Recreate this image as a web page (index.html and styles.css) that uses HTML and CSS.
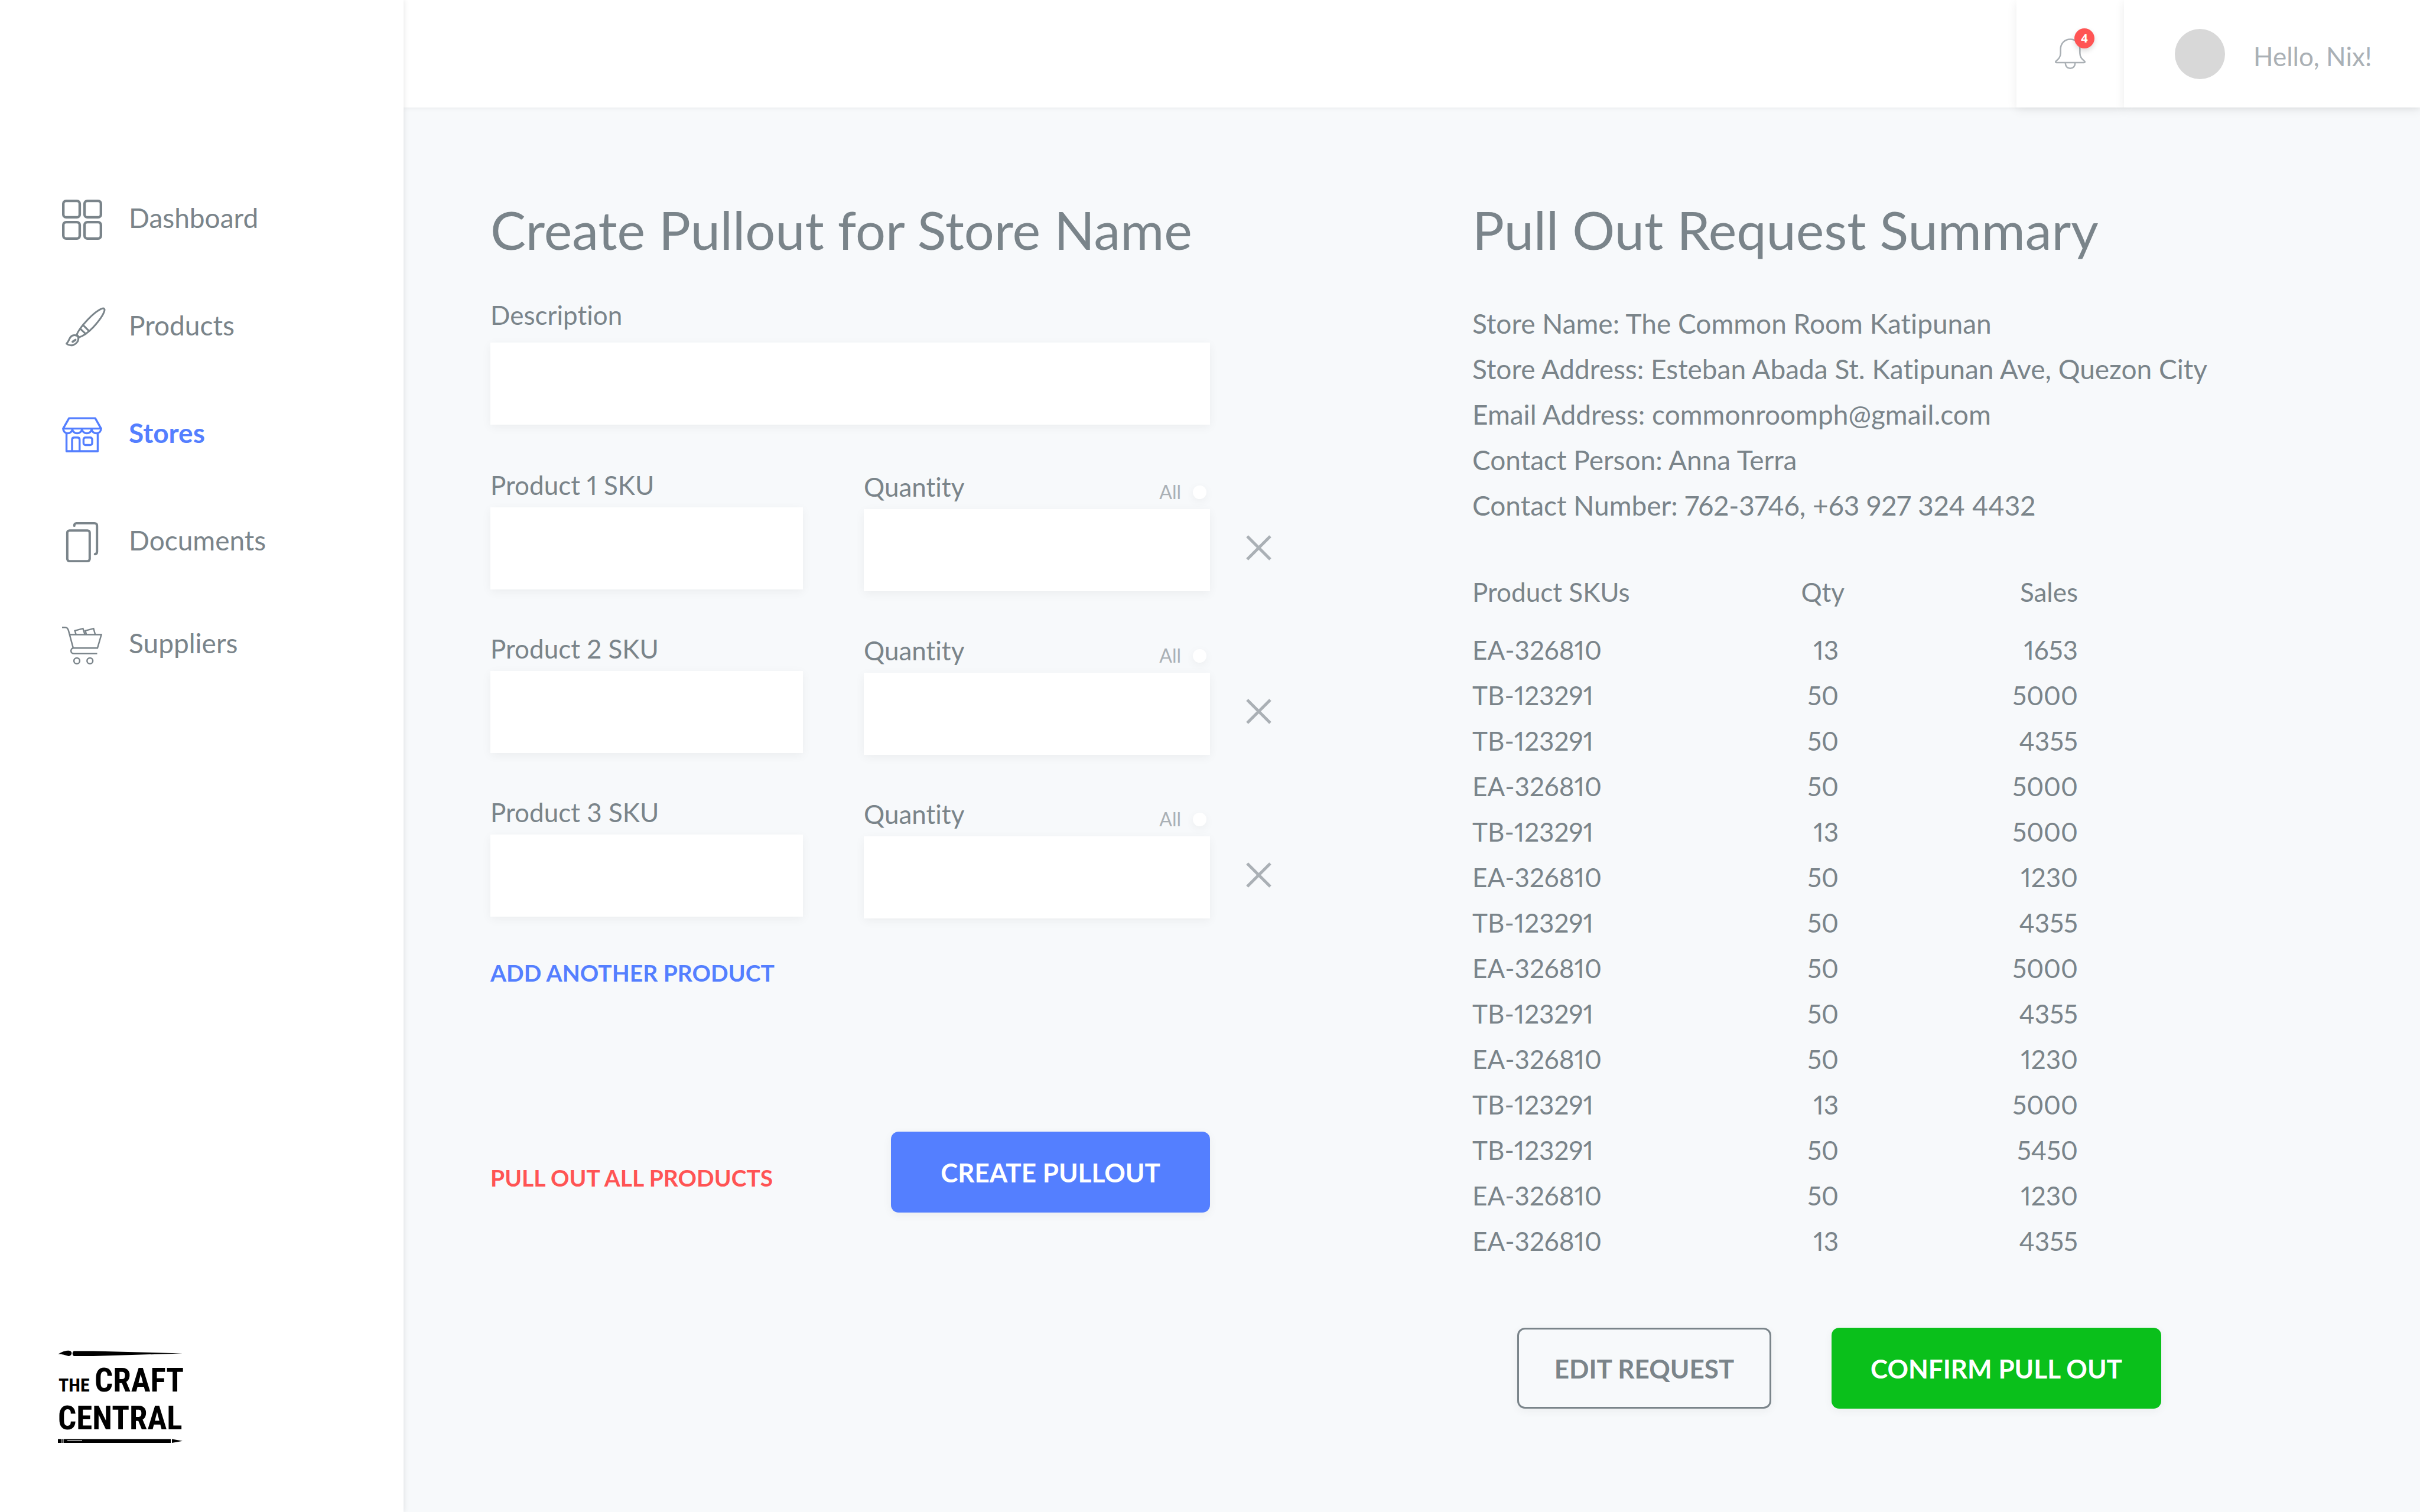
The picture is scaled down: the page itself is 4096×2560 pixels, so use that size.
FILE: index.html
```html
<!DOCTYPE html>
<html lang="en">
<head>
<meta charset="utf-8">
<title>Create Pullout</title>
<link rel="stylesheet" href="styles.css">
</head>
<body>
<div class="app">
  <aside class="sidebar">
    <nav class="nav" aria-label="Main">
      <a class="nav-item" href="#dashboard">
        <svg class="nav-icon" viewBox="0 0 72 72" fill="none" stroke="currentColor" stroke-width="4.6">
          <rect x="2.3" y="2.3" width="29.4" height="29.4" rx="5"/><rect x="40.3" y="2.3" width="29.4" height="29.4" rx="5"/>
          <rect x="2.3" y="40.3" width="29.4" height="29.4" rx="5"/><rect x="40.3" y="40.3" width="29.4" height="29.4" rx="5"/>
        </svg>
        <span>Dashboard</span>
      </a>
      <a class="nav-item" href="#products">
        <svg class="nav-icon" viewBox="0 0 72 72" fill="none" stroke="currentColor" stroke-width="3.2" stroke-linecap="round" stroke-linejoin="round">
          <path d="M26 50C29 42 36 33 45 23.500C55 13 66 4.500 72 2.500C75 1.500 77 3.500 76 6.500C74 14 66 25 56 36C47 45.500 38 52 29.500 54.500"/>
          <path d="M33 39L42.500 48M38.500 33L47.500 42M27 50L30.500 54"/>
          <path d="M8 65.500C12 62 12 58 15 54C19 48.500 27 49.500 29 54C30.500 60 26 66 20 68C15.500 69.300 11 68 8 65.500Z"/>
          <path d="M19 62L24 58.800" stroke-width="4"/>
        </svg>
        <span>Products</span>
      </a>
      <a class="nav-item nav-item-active" href="#stores" aria-current="page">
        <svg class="nav-icon" viewBox="0 0 72 72" fill="none" stroke="currentColor" stroke-width="3.600" stroke-linejoin="round">
          <path d="M12.500 6.500H59.500L70 25H2Z"/>
          <path d="M2 25C2 30 5.500 33.500 10 33.500C14.500 33.500 18.500 30 18.500 26C18.500 30 22.500 33.500 27 33.500C31.500 33.500 35.700 30 35.700 26C35.700 30 40 33.500 44.500 33.500C49 33.500 53 30 53 26C53 30 57 33.500 61.500 33.500C66.500 33.500 70 30 70 25"/>
          <path d="M8 33V65.700H64V33"/>
          <path d="M18 65V45C18 42.500 19.500 41 22 41H27.500C30 41 31.500 42.500 31.500 45V65"/>
          <rect x="38.500" y="41" width="15.500" height="13.500" rx="3.500"/>
        </svg>
        <span>Stores</span>
      </a>
      <a class="nav-item" href="#documents">
        <svg class="nav-icon" viewBox="0 0 72 72" fill="none" stroke="currentColor" stroke-width="4.200" stroke-linecap="round">
          <rect x="9.400" y="15" width="40.200" height="55" rx="4"/>
          <path d="M22 6.500C22 3.500 23.500 2 26 2H58C61 2 62.700 3.500 62.700 6.500V53C62.700 56 61 57.300 59 57.500"/>
        </svg>
        <span>Documents</span>
      </a>
      <a class="nav-item nav-item-last" href="#suppliers">
        <svg class="nav-icon" viewBox="0 0 72 72" fill="none" stroke="currentColor" stroke-width="2.600">
          <path d="M0 4.500H5.500C9 4.500 10.500 6.500 11.500 10L20 41.500H63.500L70.500 17.500H13.500"/>
          <path d="M20 41.500C14.500 42.500 14.500 51.500 21.500 51.500H63"/>
          <path d="M25 17L23 10.500L37.500 6.500L41 17.500M43.500 17L41.800 10.500L56.500 6.500L59.500 17.500"/>
          <circle cx="26.500" cy="64.500" r="5.200"/><circle cx="50" cy="64.500" r="5.200"/>
        </svg>
        <span>Suppliers</span>
      </a>
    </nav>
    <svg class="logo" viewBox="0 0 211 157" role="img" aria-label="The Craft Central">
      <path d="M0 7C8 2 14 0 20 1C26 3 23 10 18 10C12 9 8 6 0 7Z"/>
      <path d="M27 1.500H60L211 5.500L60 10H27C24 8 24 3.500 27 1.500Z"/>
      <text class="logo-small" x="1" y="70">THE</text>
      <text class="logo-large" x="62" y="70">CRAFT</text>
      <text class="logo-large" x="0" y="134">CENTRAL</text>
      <path fill-rule="evenodd" d="M0 150.500H5V157H0ZM6 150.500H8V157H6ZM9.500 150.500H191V157H9.500ZM16 152.700V154H41V152.700ZM193 150.500L211 153.700L193 157Z"/>
    </svg>
  </aside>

  <div class="page">
    <header class="topbar">
      <button class="bell-button" type="button" aria-label="Notifications">
        <span class="bell-wrap">
          <svg class="bell" viewBox="0 0 54 54" fill="none" stroke="currentColor" stroke-width="2.600" stroke-linejoin="round">
            <path d="M10 19C10 8.500 17.500 1.500 27 1.500S44 8.500 44 19V26C44 34 49 37 52.500 40.500C53 42 52.500 42.500 51 42.500H3C1.500 42.500 1 42 1.500 40.500C5 37 10 34 10 26Z"/>
            <path d="M18.500 43.500C18.500 49 22 52.700 27 52.700S35.500 49 35.500 43.500"/>
          </svg>
          <span class="badge">4</span>
        </span>
      </button>
      <div class="user"><span class="avatar"></span><span class="greeting">Hello, Nix!</span></div>
    </header>

    <main class="content">
      <form class="pullout">
        <h1>Create Pullout for Store Name</h1>
        <div class="field description">
          <label for="description">Description</label>
          <input class="box" id="description" type="text">
        </div>
        <div class="product-rows">
          <div class="product-row">
            <div class="field"><label for="sku1">Product 1 SKU</label><input class="box" id="sku1" type="text"></div>
            <div class="field quantity">
              <div class="field-head"><label for="qty1">Quantity</label><label class="all" for="all1">All <input id="all1" type="checkbox"></label></div>
              <input class="box" id="qty1" type="text">
            </div>
            <button class="remove" type="button" aria-label="Remove product 1"><svg viewBox="0 0 43 43" stroke="currentColor" stroke-width="5"><path d="M2 2L41 41M41 2L2 41"/></svg></button>
          </div>
          <div class="product-row">
            <div class="field"><label for="sku2">Product 2 SKU</label><input class="box" id="sku2" type="text"></div>
            <div class="field quantity">
              <div class="field-head"><label for="qty2">Quantity</label><label class="all" for="all2">All <input id="all2" type="checkbox"></label></div>
              <input class="box" id="qty2" type="text">
            </div>
            <button class="remove" type="button" aria-label="Remove product 2"><svg viewBox="0 0 43 43" stroke="currentColor" stroke-width="5"><path d="M2 2L41 41M41 2L2 41"/></svg></button>
          </div>
          <div class="product-row">
            <div class="field"><label for="sku3">Product 3 SKU</label><input class="box" id="sku3" type="text"></div>
            <div class="field quantity">
              <div class="field-head"><label for="qty3">Quantity</label><label class="all" for="all3">All <input id="all3" type="checkbox"></label></div>
              <input class="box" id="qty3" type="text">
            </div>
            <button class="remove" type="button" aria-label="Remove product 3"><svg viewBox="0 0 43 43" stroke="currentColor" stroke-width="5"><path d="M2 2L41 41M41 2L2 41"/></svg></button>
          </div>
        </div>
        <button class="text-button add" type="button">ADD ANOTHER PRODUCT</button>
        <div class="form-actions">
          <button class="text-button danger" type="button">PULL OUT ALL PRODUCTS</button>
          <button class="button create" type="submit">CREATE PULLOUT</button>
        </div>
      </form>

      <section class="summary">
        <h2>Pull Out Request Summary</h2>
        <p>Store Name: The Common Room Katipunan</p>
        <p>Store Address: Esteban Abada St. Katipunan Ave, Quezon City</p>
        <p>Email Address: commonroomph@gmail.com</p>
        <p>Contact Person: Anna Terra</p>
        <p>Contact Number: 762-3746, +63 927 324 4432</p>
        <table>
          <thead><tr><th>Product SKUs</th><th>Qty</th><th>Sales</th></tr></thead>
          <tbody>
            <tr><td>EA-326810</td><td>13</td><td>1653</td></tr>
            <tr><td>TB-123291</td><td>50</td><td>5000</td></tr>
            <tr><td>TB-123291</td><td>50</td><td>4355</td></tr>
            <tr><td>EA-326810</td><td>50</td><td>5000</td></tr>
            <tr><td>TB-123291</td><td>13</td><td>5000</td></tr>
            <tr><td>EA-326810</td><td>50</td><td>1230</td></tr>
            <tr><td>TB-123291</td><td>50</td><td>4355</td></tr>
            <tr><td>EA-326810</td><td>50</td><td>5000</td></tr>
            <tr><td>TB-123291</td><td>50</td><td>4355</td></tr>
            <tr><td>EA-326810</td><td>50</td><td>1230</td></tr>
            <tr><td>TB-123291</td><td>13</td><td>5000</td></tr>
            <tr><td>TB-123291</td><td>50</td><td>5450</td></tr>
            <tr><td>EA-326810</td><td>50</td><td>1230</td></tr>
            <tr><td>EA-326810</td><td>13</td><td>4355</td></tr>
          </tbody>
        </table>
        <div class="summary-actions">
          <button class="button edit" type="button">EDIT REQUEST</button>
          <button class="button confirm" type="button">CONFIRM PULL OUT</button>
        </div>
      </section>
    </main>
  </div>
</div>
</body>
</html>
```

FILE: styles.css
```css
:root {
  --text: #7a848a;
  --muted: #aab0b5;
  --blue: #547fff;
  --red: #ff5454;
  --green: #0ac01b;
  --shadow: 0 4px 16px rgba(0, 0, 0, 0.05);
}

* { box-sizing: border-box; }

body {
  margin: 0;
  background: #f7f9fb;
  color: var(--text);
  font: 44px/54px Lato, "Open Sans", sans-serif;
  font-feature-settings: "pnum";
  font-variant-ligatures: none;
}

button, input { font: inherit; color: inherit; }
button { padding: 0; border: 0; background: none; cursor: pointer; white-space: nowrap; }
input { margin: 0; border: 0; }

.app { display: flex; min-height: 100vh; }

/* Sidebar */
.sidebar {
  display: flex;
  flex: 0 0 683px;
  flex-direction: column;
  justify-content: space-between;
  padding: 278px 0 117px;
  background: #fff;
  box-shadow: 2px 0 8px rgba(0, 0, 0, 0.08);
  z-index: 1;
}
.nav-item {
  display: flex;
  align-items: center;
  gap: 45px;
  height: 182px;
  padding-left: 105px;
  color: var(--text);
  font-size: 46px;
  text-decoration: none;
}
.nav-item-last { height: 166px; }
.nav-item-active { color: var(--blue); font-weight: 700; }
.nav-icon { width: 68px; height: 68px; margin-top: 6px; overflow: visible; }
.logo { width: 211px; height: 157px; margin-left: 98px; overflow: visible; }
.logo text { font-family: "Liberation Sans Narrow", "Roboto Condensed", "Liberation Sans", sans-serif; font-weight: 700; }
.logo-small { font-size: 32px; }
.logo-large { font-size: 55px; }

/* Page */
.page { flex: 1; min-width: 0; }
.topbar {
  display: flex;
  justify-content: flex-end;
  height: 182px;
  background: #fff;
  box-shadow: 0 2px 8px rgba(0, 0, 0, 0.05);
}
.bell-button, .user { background: #fff; box-shadow: 0 4px 16px rgba(0, 0, 0, 0.08); }
.bell-button { width: 182px; color: var(--muted); }
.bell-wrap { position: relative; display: block; width: 52px; height: 52px; margin: 0 auto; }
.bell { display: block; width: 52px; height: 52px; }
.badge {
  position: absolute;
  top: -17px;
  right: -15px;
  width: 34px;
  height: 34px;
  border-radius: 50%;
  background: var(--red);
  box-shadow: 0 4px 8px rgba(0, 0, 0, 0.15);
  color: #fff;
  font-family: "Open Sans", sans-serif;
  font-size: 20px;
  font-weight: 700;
  line-height: 34px;
}
.user {
  display: flex;
  align-items: center;
  gap: 48px;
  width: 501px;
  padding-left: 86px;
  color: var(--muted);
}
.avatar { width: 85px; height: 85px; border-radius: 50%; background: #d8d8d8; }
.greeting { padding-top: 8px; }

.content {
  display: grid;
  grid-template-columns: 1fr 1fr;
  gap: 340px;
  padding: 158px 282px 0 147px;
}
h1, h2 { margin: 0; font-size: 90px; font-weight: 400; line-height: 96px; white-space: nowrap; }

/* Form */
.field { display: flex; flex-direction: column; gap: 11px; }
.box { width: 100%; height: 139px; padding: 0 32px; background: #fff; box-shadow: var(--shadow); }
.description { gap: 20px; margin: 70px 104px 75px 0; }
.product-rows { display: grid; gap: 70px; }
.product-row {
  display: grid;
  grid-template-columns: 529px 1fr 43px;
  column-gap: 103px;
}
.quantity { margin-right: -42px; padding-top: 3px; }
.field-head { display: flex; justify-content: space-between; }
.all { display: flex; align-items: center; gap: 20px; padding: 18px 6px 0 0; color: var(--muted); font-size: 32px; line-height: 36px; }
.all input { appearance: none; width: 23px; height: 23px; border-radius: 50%; background: #fff; box-shadow: var(--shadow); }
.remove { align-self: end; height: 147px; color: var(--muted); }
.remove svg { display: block; width: 43px; height: 43px; }

.text-button { font-size: 39px; font-weight: 700; }
.add { margin-top: 65px; color: var(--blue); }
.danger { padding-bottom: 32px; color: var(--red); }
.form-actions { display: flex; align-items: flex-end; justify-content: space-between; margin: 242px 104px 0 0; }

.button { height: 137px; border-radius: 13px; box-shadow: var(--shadow); font-weight: 700; color: #fff; }
.create { width: 540px; background: var(--blue); }
.edit { width: 430px; border: 3px solid var(--text); color: var(--text); }
.confirm { width: 558px; background: var(--green); }

/* Summary */
h2 { margin-bottom: 73px; }
.summary p { margin: 0; font-size: 46px; line-height: 77px; white-space: nowrap; }
table { width: 1025px; margin-top: 70px; border-collapse: collapse; line-height: 77px; table-layout: fixed; }
th, td { padding: 0; font-weight: 400; text-align: right; }
th { padding-bottom: 21px; }
th:first-child, td:first-child { text-align: left; }
th:nth-child(1) { width: 500px; }
th:nth-child(2) { width: 130px; }
td:nth-child(2) { padding-right: 10px; }
.summary-actions { display: flex; gap: 102px; margin: 108px 0 0 76px; }
```
